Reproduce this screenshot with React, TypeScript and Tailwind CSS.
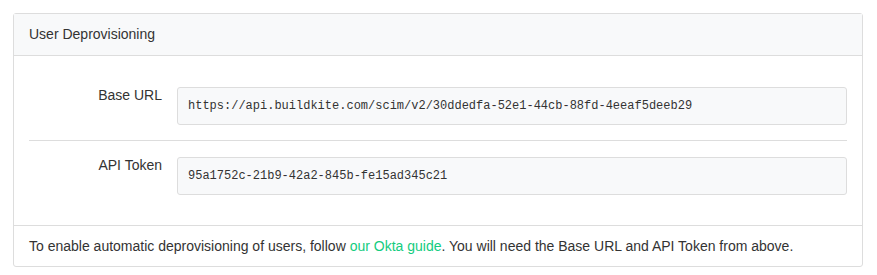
export default function App() {
	const fields = [
		{ label: "Base URL", value: "https://api.buildkite.com/scim/v2/30ddedfa-52e1-44cb-88fd-4eeaf5deeb29" },
		{ label: "API Token", value: "95a1752c-21b9-42a2-845b-fe15ad345c21" },
	];

	return (
		<div className="min-h-[275px] bg-white p-[13px] font-['Liberation_Sans',Arial,sans-serif] text-[#333]">
			<div className="w-[850px] rounded-[3px] border border-[#ddd]">
				<div className="border-b border-[#ddd] bg-[#f8f9fa] px-[15px] py-[10px] text-[14px] leading-[21px]">User Deprovisioning</div>

				<div className="px-[15px] pt-[16px] pb-[15px]">
					{fields.map((f, i) => (
						<div key={f.label} className={i > 0 ? "flex border-t border-[#ddd] pt-[16px] pb-[15px]" : "flex pt-[15px] pb-[15px]"}>
							<div className="w-[148px] shrink-0 pr-[15px] text-right text-[14px] leading-[16px]">{f.label}</div>
							<div className="flex h-[38px] flex-1 items-center rounded-[3px] border border-[#ddd] bg-[#f8f9fa] px-[10px] font-['Liberation_Mono',monospace] text-[12px]">
								{f.value}
							</div>
						</div>
					))}
				</div>

				<div className="border-t border-[#ddd] px-[15px] py-[10px] text-[14px] leading-[20px]">
					To enable automatic deprovisioning of users, follow{" "}
					<a href="#" className="text-[#14cc80]">
						our Okta guide
					</a>
					. You will need the Base URL and API Token from above.
				</div>
			</div>
		</div>
	);
}
